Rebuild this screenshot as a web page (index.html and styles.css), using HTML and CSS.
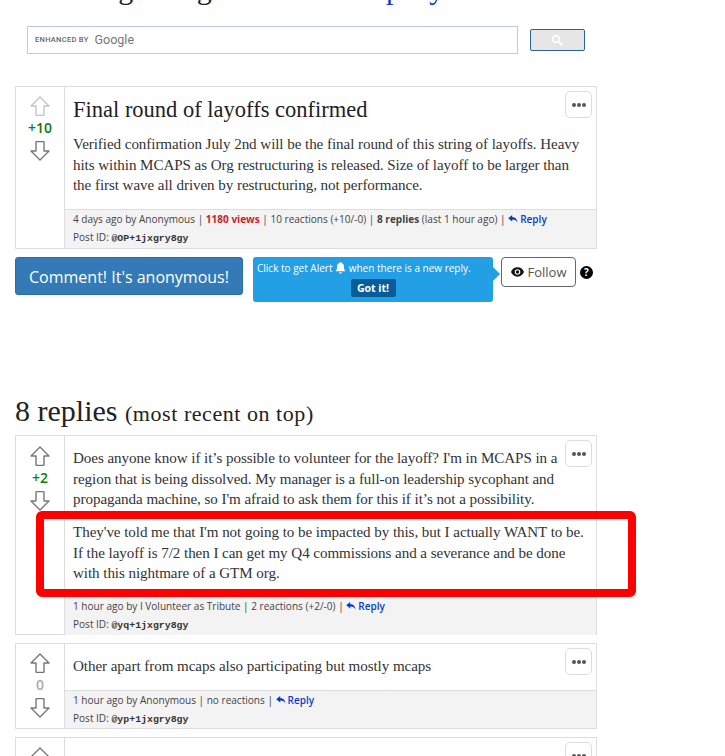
FILE: index.html
```html
<!DOCTYPE html>
<html lang="en">
<head>
<meta charset="utf-8">
<title>Final round of layoffs confirmed</title>
<link rel="stylesheet" href="styles.css">
</head>
<body>
<svg class="defs" width="0" height="0" aria-hidden="true">
  <symbol id="up" viewBox="0 0 20 20"><path d="M10 1 L19 10 L14 10 L14 18.5 Q14 19.5 13 19.5 L7 19.5 Q6 19.5 6 18.5 L6 10 L1 10 Z" fill="#fff" stroke="currentColor" stroke-width="1.4" stroke-linejoin="round"/></symbol>
  <symbol id="down" viewBox="0 0 20 20"><path d="M10 19 L19 10 L14 10 L14 1.5 Q14 .5 13 .5 L7 .5 Q6 .5 6 1.5 L6 10 L1 10 Z" fill="#fff" stroke="currentColor" stroke-width="1.4" stroke-linejoin="round"/></symbol>
  <symbol id="reply" viewBox="0 0 12 10"><path d="M5 0 L0 4 L5 8 L5 5.6 C8 5.6 10 6.4 11.5 9 C11.2 5.2 9 2.8 5 2.5 Z" fill="currentColor"/></symbol>
</svg>
<main class="page">
  <h1 class="site-title">Talking Things like the <a href="#">Company</a></h1>

  <form class="search">
    <div class="search-input">
      <span class="enhanced">ENHANCED BY</span>
      <span class="google">Google</span>
    </div>
    <button class="search-btn" type="button" aria-label="Search">
      <svg width="13" height="13" viewBox="0 0 13 13"><circle cx="5" cy="5" r="3.4" fill="none" stroke="#fff" stroke-width="1.6"/><path d="M7.6 7.6 L11.5 11.5" stroke="#fff" stroke-width="2"/></svg>
    </button>
  </form>

  <article class="post post-main">
    <div class="votes">
      <svg class="arrow arrow-faint"><use href="#up"/></svg>
      <span class="score score-pos">+10</span>
      <svg class="arrow"><use href="#down"/></svg>
    </div>
    <div class="post-col">
      <div class="post-body">
        <button class="more" type="button" aria-label="More"><i></i><i></i><i></i></button>
        <h2 class="post-title">Final round of layoffs confirmed</h2>
        <p>Verified confirmation July 2nd will be the final round of this string of layoffs. Heavy hits within MCAPS as Org restructuring is released. Size of layoff to be larger than the first wave all driven by restructuring, not performance.</p>
      </div>
      <footer class="post-foot">
        <div>4 days ago by Anonymous | <b class="views">1180 views</b> | 10 reactions (+10/-0) | <b>8 replies</b> (last 1 hour ago) | <a class="reply" href="#"><svg class="reply-icon"><use href="#reply"/></svg>Reply</a></div>
        <div>Post ID: <code>@OP+1jxgry8gy</code></div>
      </footer>
    </div>
  </article>

  <div class="actions">
    <a class="comment-btn" href="#">Comment! It's anonymous!</a>
    <div class="alert">
      <div>Click to get Alert <svg class="bell" viewBox="0 0 12 13"><path d="M6 0 C6.7 0 7 .5 7 1 C9 1.5 9.8 3 9.8 5 C9.8 8 10.5 9 11.5 10 L.5 10 C1.5 9 2.2 8 2.2 5 C2.2 3 3 1.5 5 1 C5 .5 5.3 0 6 0 Z M4.5 11 L7.5 11 C7.5 12 6.8 12.6 6 12.6 C5.2 12.6 4.5 12 4.5 11 Z" fill="#fff"/></svg> when there is a new reply.</div>
      <button class="got-it" type="button">Got it!</button>
    </div>
    <a class="follow" href="#">
      <svg class="eye" viewBox="0 0 14 10"><path d="M7 0 C3.6 0 1.2 2.2 0 5 C1.2 7.8 3.6 10 7 10 C10.4 10 12.8 7.8 14 5 C12.8 2.2 10.4 0 7 0 Z" fill="#111"/><circle cx="7" cy="5" r="3" fill="#fff"/><circle cx="7" cy="5" r="1.8" fill="#111"/></svg>
      Follow
    </a>
    <span class="help">?</span>
  </div>

  <h2 class="replies-title">8 replies <small>(most recent on top)</small></h2>

  <article class="post post-reply">
    <div class="votes">
      <svg class="arrow"><use href="#up"/></svg>
      <span class="score score-pos">+2</span>
      <svg class="arrow"><use href="#down"/></svg>
    </div>
    <div class="post-col">
      <div class="post-body">
        <button class="more" type="button" aria-label="More"><i></i><i></i><i></i></button>
        <p>Does anyone know if it’s possible to volunteer for the layoff? I'm in MCAPS in a region that is being dissolved. My manager is a full-on leadership sycophant and propaganda machine, so I'm afraid to ask them for this if it’s not a possibility.</p>
        <p>They've told me that I'm not going to be impacted by this, but I actually WANT to be. If the layoff is 7/2 then I can get my Q4 commissions and a severance and be done with this nightmare of a GTM org.</p>
      </div>
      <footer class="post-foot">
        <div>1 hour ago by I Volunteer as Tribute | 2 reactions (+2/-0) | <a class="reply" href="#"><svg class="reply-icon"><use href="#reply"/></svg>Reply</a></div>
        <div>Post ID: <code>@yq+1jxgry8gy</code></div>
      </footer>
    </div>
    <div class="highlight"></div>
  </article>

  <article class="post post-short">
    <div class="votes">
      <svg class="arrow"><use href="#up"/></svg>
      <span class="score score-zero">0</span>
      <svg class="arrow"><use href="#down"/></svg>
    </div>
    <div class="post-col">
      <div class="post-body">
        <button class="more" type="button" aria-label="More"><i></i><i></i><i></i></button>
        <p>Other apart from mcaps also participating but mostly mcaps</p>
      </div>
      <footer class="post-foot">
        <div>1 hour ago by Anonymous | no reactions | <a class="reply" href="#"><svg class="reply-icon"><use href="#reply"/></svg>Reply</a></div>
        <div>Post ID: <code>@yp+1jxgry8gy</code></div>
      </footer>
    </div>
  </article>

  <article class="post post-next">
    <div class="votes">
      <svg class="arrow"><use href="#up"/></svg>
    </div>
    <div class="post-col">
      <div class="post-body">
        <button class="more" type="button" aria-label="More"><i></i><i></i><i></i></button>
      </div>
    </div>
  </article>
</main>
</body>
</html>
```
FILE: styles.css
```css
html, body {
  margin: 0;
  height: 756px;
  overflow: hidden;
  background: #fff;
}
body {
  font-family: "Open Sans", "Noto Sans", sans-serif;
  color: #333;
}
.defs { position: absolute; }
.page {
  width: 582px;
  padding-left: 15px;
}
.site-title {
  margin: -26px 0 0;
  height: 52px;
  padding-left: 27px;
  font: 400 30px/30px "Liberation Serif", serif;
  color: #222;
  white-space: nowrap;
}
.site-title a { color: #0a3cc8; text-decoration: none; }

.search {
  display: flex;
  align-items: center;
  gap: 12px;
  margin-left: 12px;
  width: 558px;
}
.search-input {
  flex: 0 0 491px;
  box-sizing: border-box;
  height: 28px;
  border: 1px solid #b9cbe6;
  display: flex;
  align-items: center;
  padding-left: 7px;
  gap: 6px;
  color: #666;
}
.enhanced { font: 500 7.5px/1 "Roboto", sans-serif; color: #666; letter-spacing: .3px; }
.google { font: 400 12.5px/1 "Roboto", sans-serif; color: #777; }
.search-btn {
  flex: 0 0 55px;
  box-sizing: border-box;
  height: 22px;
  padding: 0;
  background: #e6e6e6;
  border: 1px solid #2f6396;
  border-radius: 2px;
  display: flex;
  align-items: center;
  justify-content: center;
}

.post {
  position: relative;
  display: flex;
  border: 1px solid #ddd;
  box-sizing: border-box;
  width: 582px;
}
.post-main { margin-top: 32px; height: 163px; }
.post-reply { height: 200px; }
.post-short { margin-top: 8px; height: 86px; }
.post-next { margin-top: 8px; height: 60px; }

.votes {
  flex: 0 0 48px;
  border-right: 1px solid #ddd;
  display: flex;
  flex-direction: column;
  align-items: center;
  padding-top: 9px;
}
.post-reply .votes { padding-top: 10px; }
.arrow { width: 20px; height: 20px; color: #777; flex: none; }
.arrow-faint { color: #c4c4c4; }
.score {
  font-size: 14px;
  font-weight: 600;
  line-height: 16px;
  margin: 4px 0 5px;
}
.score-pos { color: #0a7d0a; }
.score-zero { color: #aaa; }

.post-col {
  flex: 1;
  min-width: 0;
  display: flex;
  flex-direction: column;
}
.post-body {
  flex: 1;
  position: relative;
  padding: 12px 12px 0 8px;
  font: 400 15.1px/20.5px "Liberation Serif", serif;
  color: #333;
}
.post-body p { margin: 0 0 12.5px; letter-spacing: -.07px; }
.post-title {
  margin: 0 0 13px;
  font: 400 22.5px/22px "Liberation Serif", serif;
  color: #222;
}
.more {
  position: absolute;
  top: 4px;
  right: 4px;
  width: 27px;
  height: 27px;
  box-sizing: border-box;
  padding: 0;
  background: #fff;
  border: 1px solid #ddd;
  border-radius: 5px;
  display: flex;
  align-items: center;
  justify-content: center;
  gap: 1px;
}
.more i {
  width: 4px;
  height: 4px;
  border-radius: 50%;
  background: #555;
}
.post-foot {
  background: #f3f3f3;
  border-top: 1px solid #ddd;
  padding: 0 8px;
  font-size: 10.05px;
  line-height: 18px;
  color: #444;
  height: 38px;
  box-sizing: border-box;
  flex: none;
}
.post-main .post-foot,
.post-reply .post-foot { height: 39px; }
.post-foot b { font-weight: 700; }
.views { color: #d0202a; }
.post-foot code { font: 700 9.9px/1 "Liberation Mono", monospace; color: #333; }
.reply { color: #0a3cc8; text-decoration: none; font-weight: 600; }
.reply-icon { width: 10px; height: 8px; margin-right: 2px; }

.actions {
  display: flex;
  align-items: flex-start;
  margin-top: 8px;
  width: 582px;
}
.comment-btn {
  flex: 0 0 228px;
  box-sizing: border-box;
  height: 38px;
  background: #337ab7;
  border: 1px solid #2e6da4;
  border-radius: 3px;
  color: #fff;
  font-size: 16px;
  line-height: 38px;
  text-align: center;
  text-decoration: none;
}
.alert {
  position: relative;
  flex: 0 0 240px;
  box-sizing: border-box;
  height: 45px;
  margin-left: 10px;
  padding: 4px 4px 0;
  background: #239fe6;
  border-radius: 3px;
  color: #fff;
  font-size: 10px;
  line-height: 15px;
  text-align: center;
}
.alert > div { text-align: left; }
.alert::after {
  content: "";
  position: absolute;
  top: 10px;
  right: -7px;
  border-left: 7px solid #239fe6;
  border-top: 7px solid transparent;
  border-bottom: 7px solid transparent;
}
.bell { width: 11px; height: 12px; vertical-align: -2px; }
.got-it {
  display: block;
  margin: 3px auto 0;
  width: 45px;
  height: 18px;
  padding: 0;
  border: 0;
  border-radius: 2px;
  background: #0a5c99;
  color: #fff;
  font: 700 10.5px/18px "Open Sans", sans-serif;
}
.follow {
  flex: 0 0 75px;
  box-sizing: border-box;
  height: 30px;
  margin-left: 8px;
  border: 1px solid #666;
  border-radius: 4px;
  display: flex;
  align-items: center;
  justify-content: center;
  gap: 4px;
  color: #555;
  font-size: 13px;
  text-decoration: none;
}
.eye { width: 13px; height: 10px; }
.help {
  width: 13px;
  height: 13px;
  margin: 9px 0 0 4px;
  border-radius: 50%;
  background: #000;
  color: #fff;
  font-size: 10px;
  font-weight: 700;
  line-height: 13px;
  text-align: center;
}

.replies-title {
  margin: 93px 0 9px;
  height: 31px;
  font: 400 30px/31px "Liberation Serif", serif;
  color: #222;
}
.replies-title small { font-size: 22px; letter-spacing: .55px; }

.highlight {
  position: absolute;
  left: 20px;
  top: 75px;
  width: 600px;
  height: 86px;
  box-sizing: border-box;
  border: 8px solid #f00;
  border-radius: 6px;
  pointer-events: none;
}
```
